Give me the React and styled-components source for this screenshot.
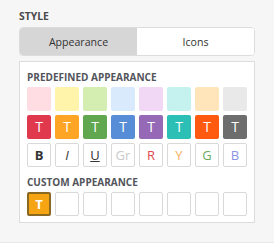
import React from "react";
import styled, { createGlobalStyle } from "styled-components";

const GlobalStyle = createGlobalStyle`
  html, body { margin: 0; padding: 0; background: #f6f6f6; }
  body { font-family: "Open Sans", "Noto Sans", sans-serif; }
`;

const Page = styled.div`
  box-sizing: border-box;
  width: 274px;
  height: 243px;
  padding: 9px 0 0 19px;
  border-bottom: 1px solid #e8e8e8;
  background: #f6f6f6;
`;

const Section = styled.div`
  width: 236px;
`;

const SectionTitle = styled.div`
  font-size: 10.4px;
  line-height: 15px;
  font-weight: 700;
  color: #4a4a4a;
  margin-bottom: 3px;
`;

const Tabs = styled.div`
  box-sizing: border-box;
  height: 29px;
  display: grid;
  grid-template-columns: 1fr 1fr;
  border: 1px solid #dcdcdc;
  border-radius: 4px;
  overflow: hidden;
  background: #fff;
`;

const Tab = styled.div`
  display: flex;
  align-items: center;
  justify-content: center;
  font-size: 10.6px;
  color: #333;
  background: ${(p) => (p.$active ? "#d6d6d6" : "#fff")};
`;

const Panel = styled.div`
  margin-top: 5px;
  border: 1px solid #dcdcdc;
  background: #fff;
  padding: 8px 7px 6px;
`;

const GroupLabel = styled.div`
  font-size: 10px;
  line-height: 15px;
  font-weight: 700;
  color: #52545a;
  margin-top: ${(p) => (p.$spaced ? "8px" : "0")};
  margin-bottom: 2px;
`;

const Grid = styled.div`
  display: grid;
  grid-template-columns: repeat(8, 24px);
  grid-auto-rows: 24px;
  gap: 4px;
`;

const Swatch = styled.div`
  box-sizing: border-box;
  width: 24px;
  height: 24px;
  border-radius: 2px;
  display: flex;
  align-items: center;
  justify-content: center;
  font-size: ${(p) => p.$size || 13}px;
  line-height: 1;
  background: ${(p) => p.$bg || "#fff"};
  color: ${(p) => p.$fg || "#fff"};
  border: ${(p) => p.$border || "none"};
  font-weight: ${(p) => (p.$bold ? 700 : 400)};
  font-style: ${(p) => (p.$italic ? "italic" : "normal")};
  text-decoration: ${(p) => (p.$underline ? "underline" : "none")};
`;

const light = ["#ffdde2", "#fff4a9", "#d4edb0", "#d9eafd", "#f1d9f5", "#c5f2ef", "#ffe5b9", "#e9e9e9"];
const dark = ["#e0394e", "#ffa526", "#61a74f", "#578dd6", "#9569b5", "#2bbfb6", "#ff5a0f", "#6d6d6d"];
const styles = [
  { t: "B", fg: "#333", bold: true },
  { t: "I", fg: "#333", italic: true },
  { t: "U", fg: "#333", underline: true },
  { t: "Gr", fg: "#c9c9c9" },
  { t: "R", fg: "#e2494f" },
  { t: "Y", fg: "#f6b45e" },
  { t: "G", fg: "#6bab5b" },
  { t: "B", fg: "#8d93e0" },
];

const outline = "1px solid #d9d9d9";

export default function App() {
  return (
    <>
      <GlobalStyle />
      <Page>
        <Section>
          <SectionTitle>STYLE</SectionTitle>
          <Tabs>
            <Tab $active>Appearance</Tab>
            <Tab>Icons</Tab>
          </Tabs>
          <Panel>
            <GroupLabel>PREDEFINED APPEARANCE</GroupLabel>
            <Grid>
              {light.map((c) => (
                <Swatch key={"l" + c} $bg={c} />
              ))}
              {dark.map((c) => (
                <Swatch key={"d" + c} $bg={c} $size={14}>T</Swatch>
              ))}
              {styles.map((s, i) => (
                <Swatch
                  key={"s" + i}
                  $border={outline}
                  $fg={s.fg}
                  $bold={s.bold}
                  $italic={s.italic}
                  $underline={s.underline}
                >
                  {s.t}
                </Swatch>
              ))}
            </Grid>
            <GroupLabel $spaced>CUSTOM APPEARANCE</GroupLabel>
            <Grid>
              <Swatch $bg="#f5a414" $border="2px solid #8a6a22" $bold>T</Swatch>
              {Array.from({ length: 7 }).map((_, i) => (
                <Swatch key={"c" + i} $border={outline} />
              ))}
            </Grid>
          </Panel>
        </Section>
      </Page>
    </>
  );
}
